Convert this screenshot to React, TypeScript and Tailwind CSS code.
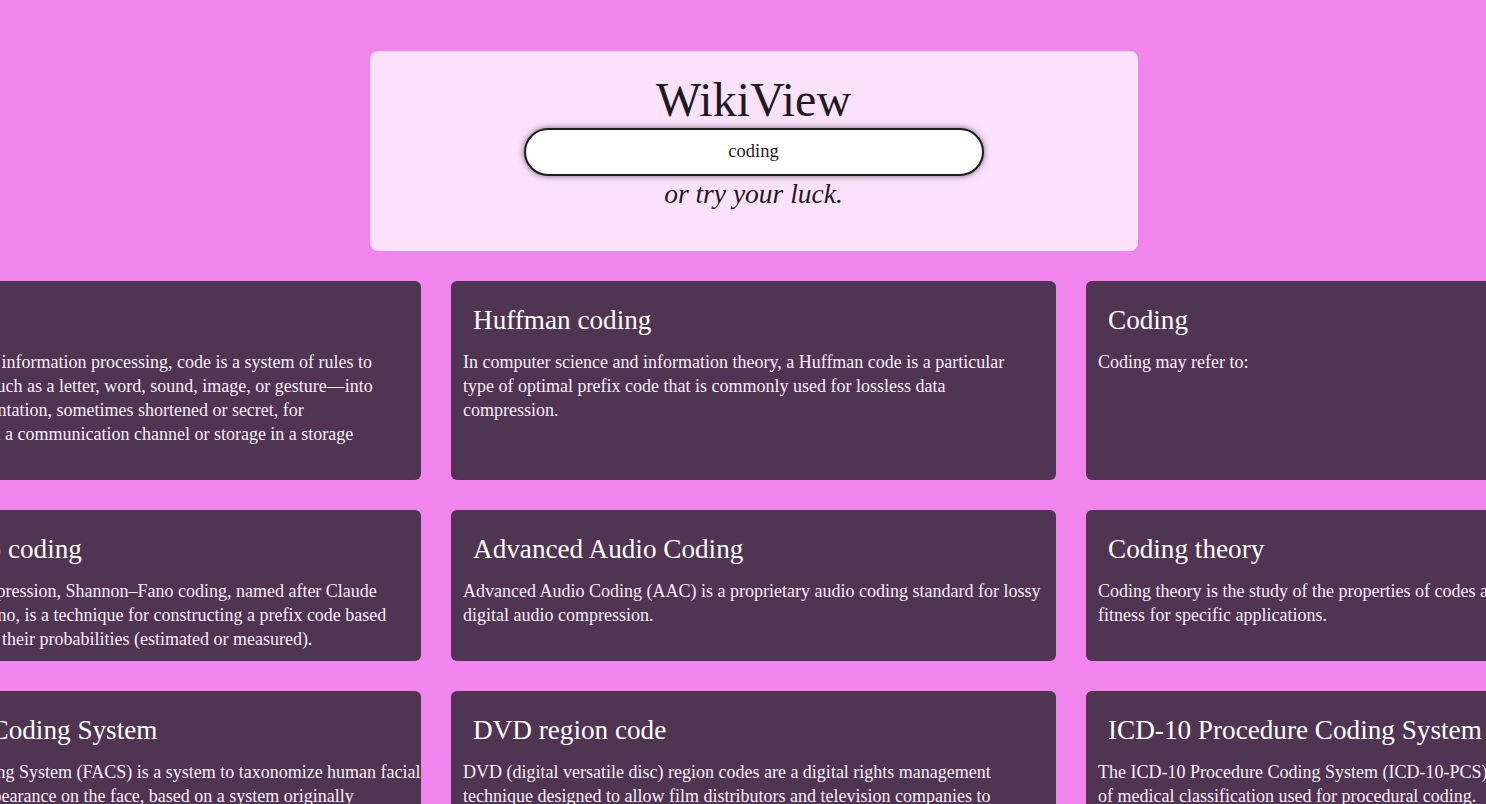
const results = [
  {
    title: "Code",
    lines: [
      "In communications and information processing, code is a system of rules to",
      "convert information—such as a letter, word, sound, image, or gesture—into",
      "another form or representation, sometimes shortened or secret, for",
      "communication through a communication channel or storage in a storage",
      "medium.",
    ],
  },
  {
    title: "Huffman coding",
    lines: [
      "In computer science and information theory, a Huffman code is a particular",
      "type of optimal prefix code that is commonly used for lossless data",
      "compression.",
    ],
  },
  { title: "Coding", lines: ["Coding may refer to:"] },
  {
    title: "Shannon–Fano coding",
    lines: [
      "In the field of data compression, Shannon–Fano coding, named after Claude",
      "Shannon and Robert Fano, is a technique for constructing a prefix code based",
      "on a set of symbols and their probabilities (estimated or measured).",
    ],
  },
  {
    title: "Advanced Audio Coding",
    lines: [
      "Advanced Audio Coding (AAC) is a proprietary audio coding standard for lossy",
      "digital audio compression.",
    ],
  },
  {
    title: "Coding theory",
    lines: [
      "Coding theory is the study of the properties of codes and their respective",
      "fitness for specific applications.",
    ],
  },
  {
    title: "Facial Action Coding System",
    lines: [
      "The Facial Action Coding System (FACS) is a system to taxonomize human facial",
      "movements by their appearance on the face, based on a system originally",
      "developed by a Swedish anatomist named Carl-Herman Hjortsjö.",
    ],
  },
  {
    title: "DVD region code",
    lines: [
      "DVD (digital versatile disc) region codes are a digital rights management",
      "technique designed to allow film distributors and television companies to",
      "control the international distribution of a DVD release, including its",
      "release date and price, according to the appropriate region.",
    ],
  },
  {
    title: "ICD-10 Procedure Coding System",
    lines: [
      "The ICD-10 Procedure Coding System (ICD-10-PCS) is a US system",
      "of medical classification used for procedural coding.",
    ],
  },
];

function ResultCard({ title, lines }: { title: string; lines: string[] }) {
  return (
    <div className="rounded-md bg-[#4f3551] px-3 pt-3 pb-[10px] text-[#f8eef8]">
      <h2 className="mt-[9px] mb-3 px-[10px] text-[27.2px] leading-[36px] text-white">{title}</h2>
      <p className="text-[18px] leading-6">
        {lines.map((line) => (
          <span key={line} className="block whitespace-nowrap">
            {line}
          </span>
        ))}
      </p>
    </div>
  );
}

export default function App() {
  return (
    <div className="min-h-screen w-full overflow-hidden bg-[#f185ed] font-['Liberation_Serif',serif]">
      <div className="w-[1507px] pt-[51px] pb-10">
        <header className="mx-auto flex w-[768px] flex-col items-center rounded-lg bg-[#fbe2fb] pt-[21px] pb-[39px] text-[#1e1a1e]">
          <h1 className="text-[48px] leading-[56px]">WikiView</h1>
          <input
            type="text"
            defaultValue="coding"
            className="h-12 w-[460px] rounded-full border-2 border-[#1f1b1f] bg-white pb-px text-center text-[18.5px] text-[#222] shadow-[0_0_6px_rgba(0,0,0,0.55)] outline-none"
          />
          <p className="text-[27.5px] leading-9 italic">or try your luck.</p>
        </header>
        <div className="mt-[30px] flex justify-center">
          <div className="grid w-[1875px] shrink-0 grid-cols-[605px_605px_605px] gap-[30px]">
            {results.map((r) => (
              <ResultCard key={r.title} title={r.title} lines={r.lines} />
            ))}
          </div>
        </div>
      </div>
    </div>
  );
}
